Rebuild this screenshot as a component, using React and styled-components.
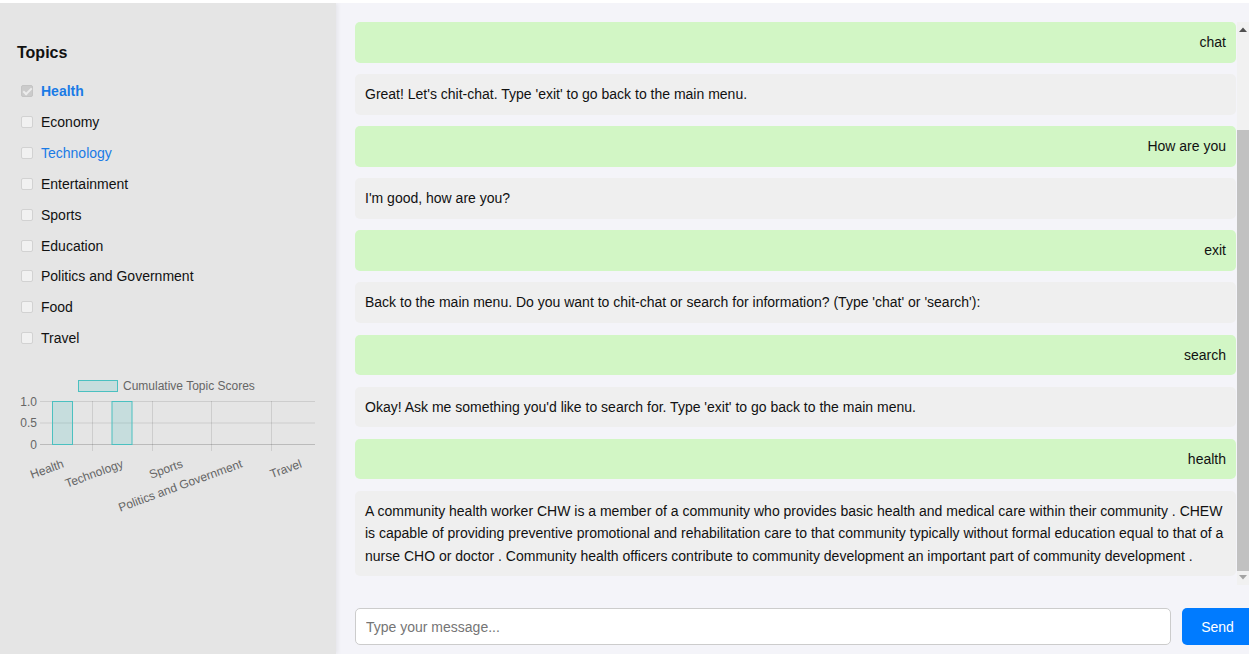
import React from "react";
import styled, { createGlobalStyle } from "styled-components";

const Global = createGlobalStyle`
  html, body { margin: 0; padding: 0; background: #ffffff; }
  body { font-family: "Liberation Sans", Arial, sans-serif; color: #111; }
  * { box-sizing: border-box; }
`;

const AppShell = styled.div`
  margin-top: 3px;
  width: 1249px;
  height: 651px;
  display: flex;
  overflow: hidden;
  background: #f4f4f9;
`;

const Sidebar = styled.aside`
  width: 336px;
  flex: 0 0 336px;
  background: #e5e5e5;
  padding: 41px 17px 0 17px;
  box-shadow: 2px 0 4px rgba(0, 0, 0, 0.06);
  display: flex;
  flex-direction: column;
  position: relative;
  z-index: 1;
`;

const Heading = styled.h3`
  margin: 0 0 14px 0;
  font-size: 16px;
  font-weight: 700;
  line-height: 18px;
  color: #111;
`;

const TopicList = styled.ul`
  list-style: none;
  margin: 0;
  padding: 0;
`;

const TopicRow = styled.li`
  height: 30.85px;
  display: flex;
  align-items: center;
  padding-left: 4px;
`;

const Check = styled.input.attrs({ type: "checkbox" })`
  appearance: none;
  -webkit-appearance: none;
  margin: 0 8px 0 0;
  width: 12px;
  height: 12px;
  border: 1px solid #d2d2d2;
  border-radius: 2px;
  background: #f1f1f1;
  position: relative;
  &:checked {
    background: #cbcbcb;
    border-color: #c4c4c4;
  }
  &:checked::after {
    content: "";
    position: absolute;
    left: 3px;
    top: 0px;
    width: 3px;
    height: 7px;
    border: solid #ececec;
    border-width: 0 2px 2px 0;
    transform: rotate(45deg);
  }
`;

const TopicLabel = styled.span`
  font-size: 14px;
  line-height: 16px;
  color: ${(p) => (p.$active ? "#1a7be6" : "#111")};
  font-weight: ${(p) => (p.$bold ? 700 : 400)};
`;

const ChartWrap = styled.div`
  margin-top: 17px;
`;

const Main = styled.main`
  flex: 1;
  min-width: 0;
  display: flex;
  flex-direction: column;
  padding: 19px 0 9px 19px;
  overflow: hidden;
`;

const ChatArea = styled.div`
  flex: 1;
  min-height: 0;
  display: flex;
  gap: 1px;
`;

const MessageList = styled.div`
  flex: 1;
  min-width: 0;
  overflow: hidden;
  display: flex;
  flex-direction: column;
  gap: 11.6px;
`;

const Bubble = styled.div`
  padding: 9px 10px;
  border-radius: 5px;
  font-size: 14px;
  line-height: 22.5px;
  color: #111;
  background: ${(p) => (p.$user ? "#d2f6c5" : "#efefef")};
  text-align: ${(p) => (p.$user ? "right" : "left")};
`;

const Rail = styled.div`
  width: 12px;
  flex: 0 0 12px;
  background: #f1f1f1;
  display: flex;
  flex-direction: column;
`;

const RailButton = styled.div`
  height: 15px;
  display: flex;
  align-items: center;
  justify-content: center;
`;

const Track = styled.div`
  flex: 1;
  display: flex;
  flex-direction: column;
`;

const Thumb = styled.div`
  background: #c1c1c1;
  width: 100%;
`;

const InputRow = styled.form`
  margin-top: 23px;
  margin-right: -4px;
  height: 37px;
  display: flex;
  gap: 11px;
`;

const TextBox = styled.input`
  flex: 1;
  min-width: 0;
  height: 37px;
  border: 1px solid #cccccc;
  border-radius: 5px;
  background: #fff;
  padding: 0 10px;
  font-family: "Liberation Sans", Arial, sans-serif;
  font-size: 14px;
  color: #111;
  &::placeholder { color: #757575; }
  outline: none;
`;

const SendButton = styled.button`
  width: 71px;
  height: 37px;
  border: none;
  border-radius: 5px;
  background: #007bff;
  color: #fff;
  font-family: "Liberation Sans", Arial, sans-serif;
  font-size: 14px;
  padding: 0;
`;

const topics = [
  { name: "Health", checked: true, active: true, bold: true },
  { name: "Economy" },
  { name: "Technology", active: true },
  { name: "Entertainment" },
  { name: "Sports" },
  { name: "Education" },
  { name: "Politics and Government" },
  { name: "Food" },
  { name: "Travel" },
];

const messages = [
  { user: true, text: "chat" },
  { text: "Great! Let's chit-chat. Type 'exit' to go back to the main menu." },
  { user: true, text: "How are you" },
  { text: "I'm good, how are you?" },
  { user: true, text: "exit" },
  { text: "Back to the main menu. Do you want to chit-chat or search for information? (Type 'chat' or 'search'):" },
  { user: true, text: "search" },
  { text: "Okay! Ask me something you'd like to search for. Type 'exit' to go back to the main menu." },
  { user: true, text: "health" },
  {
    text:
      "A community health worker CHW is a member of a community who provides basic health and medical care within their community . CHEW is capable of providing preventive promotional and rehabilitation care to that community typically without formal education equal to that of a nurse CHO or doctor . Community health officers contribute to community development an important part of community development .",
  },
];

const chartLabels = ["Health", "Technology", "Sports", "Politics and Government", "Travel"];
const chartValues = [1, 1, 0, 0, 0];

function TopicChart() {
  const centers = [45.5, 105, 164.5, 224, 283.5];
  const baseY = 73;
  const topY = 30;
  const fill = "rgba(75,192,192,0.2)";
  const stroke = "rgb(75,192,192)";
  const tick = { fontSize: 12, fill: "#666", fontFamily: "Liberation Sans, Arial, sans-serif" };
  return (
    <svg width="302" height="160" viewBox="0 0 302 160">
      <rect x="61.5" y="9.5" width="39" height="11" fill={fill} stroke={stroke} strokeWidth="1" />
      <text x="106" y="19" {...tick}>Cumulative Topic Scores</text>
      {[topY, 51.5, baseY].map((y, i) => (
        <line key={i} x1="23" x2="298" y1={y + 0.5} y2={y + 0.5} stroke={i === 2 ? "rgba(0,0,0,0.18)" : "rgba(0,0,0,0.1)"} strokeWidth="1" />
      ))}
      {[75, 135, 194, 254].map((x) => (
        <line key={x} x1={x + 0.5} x2={x + 0.5} y1={topY} y2="80" stroke="rgba(0,0,0,0.1)" strokeWidth="1" />
      ))}
      <text x="20" y={topY + 4.5} textAnchor="end" {...tick}>1.0</text>
      <text x="20" y="56" textAnchor="end" {...tick}>0.5</text>
      <text x="20" y={baseY + 4.5} textAnchor="end" {...tick}>0</text>
      {chartValues.map((v, i) =>
        v > 0 ? (
          <rect
            key={i}
            x={centers[i] - 10}
            y={baseY - (baseY - topY) * v + 0.5}
            width="20"
            height={(baseY - topY) * v}
            fill={fill}
            stroke={stroke}
            strokeWidth="1"
          />
        ) : null
      )}
      {chartLabels.map((l, i) => (
        <text
          key={l}
          x={centers[i] + 1}
          y="93"
          textAnchor="end"
          dominantBaseline="middle"
          transform={`rotate(-20 ${centers[i] + 1} 93)`}
          {...tick}
        >
          {l}
        </text>
      ))}
    </svg>
  );
}

function ScrollRail() {
  return (
    <Rail>
      <RailButton>
        <svg width="8" height="5" viewBox="0 0 8 5">
          <path d="M0 5 L4 0.5 L8 5 Z" fill="#505050" />
        </svg>
      </RailButton>
      <Track>
        <div style={{ height: 93 }} />
        <Thumb style={{ height: 441 }} />
      </Track>
      <RailButton>
        <svg width="8" height="5" viewBox="0 0 8 5">
          <path d="M0 0 L8 0 L4 4.5 Z" fill="#a3a3a3" />
        </svg>
      </RailButton>
    </Rail>
  );
}

export default function App() {
  return (
    <>
      <Global />
      <AppShell>
        <Sidebar>
          <Heading>Topics</Heading>
          <TopicList>
            {topics.map((t) => (
              <TopicRow key={t.name}>
                <Check defaultChecked={!!t.checked} disabled={!!t.checked} />
                <TopicLabel $active={t.active} $bold={t.bold}>{t.name}</TopicLabel>
              </TopicRow>
            ))}
          </TopicList>
          <ChartWrap>
            <TopicChart />
          </ChartWrap>
        </Sidebar>
        <Main>
          <ChatArea>
            <MessageList>
              {messages.map((m, i) => (
                <Bubble key={i} $user={m.user}>{m.text}</Bubble>
              ))}
            </MessageList>
            <ScrollRail />
          </ChatArea>
          <InputRow onSubmit={(e) => e.preventDefault()}>
            <TextBox placeholder="Type your message..." />
            <SendButton type="submit">Send</SendButton>
          </InputRow>
        </Main>
      </AppShell>
    </>
  );
}
